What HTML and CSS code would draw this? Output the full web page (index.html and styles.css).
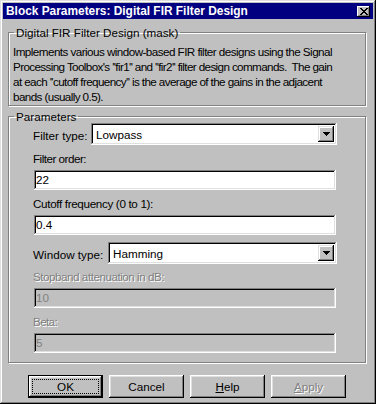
FILE: index.html
```html
<!DOCTYPE html>
<html>
<head>
<meta charset="utf-8">
<title>Block Parameters</title>
<link rel="stylesheet" href="styles.css">
</head>
<body>
<div class="window">
  <div class="titlebar">
    <span class="title">Block Parameters: Digital FIR Filter Design</span>
    <span class="close"><svg width="8" height="7" viewBox="0 0 8 7" shape-rendering="crispEdges"><path fill="#000" d="M0 0h2v1H0zM6 0h2v1H6zM1 1h2v1H1zM5 1h2v1H5zM2 2h4v1H2zM3 3h2v1H3zM2 4h4v1H2zM1 5h2v1H1zM5 5h2v1H5zM0 6h2v1H0zM6 6h2v1H6z"/></svg></span>
  </div>
  <div class="content">
    <fieldset class="group desc">
      <legend>Digital FIR Filter Design (mask)</legend>
      <p>
        <span class="ln" data-w="319">Implements various window-based FIR filter designs using the Signal</span>
        <span class="ln" data-w="319">Processing Toolbox's ''fir1'' and ''fir2'' filter design commands.&nbsp; The gain</span>
        <span class="ln" data-w="309">at each ''cutoff frequency'' is the average of the gains in the adjacent</span>
        <span class="ln" data-w="90">bands (usually 0.5).</span>
      </p>
    </fieldset>
    <fieldset class="group params">
      <legend>Parameters</legend>
      <div class="row">
        <label class="rlabel w1">Filter type:</label>
        <div class="combo c1"><span class="value">Lowpass</span><span class="drop"><svg width="7" height="4" viewBox="0 0 7 4" shape-rendering="crispEdges"><path fill="#000" d="M0 0h7v1H0zM1 1h5v1H1zM2 2h3v1H2zM3 3h1v1H3z"/></svg></span></div>
      </div>
      <div class="cap"><span data-w="53">Filter order:</span></div>
      <div class="field">22</div>
      <div class="cap"><span data-w="120">Cutoff frequency (0 to 1):</span></div>
      <div class="field">0.4</div>
      <div class="row row2">
        <label class="rlabel w2">Window type:</label>
        <div class="combo c2"><span class="value">Hamming</span><span class="drop"><svg width="7" height="4" viewBox="0 0 7 4" shape-rendering="crispEdges"><path fill="#000" d="M0 0h7v1H0zM1 1h5v1H1zM2 2h3v1H2zM3 3h1v1H3z"/></svg></span></div>
      </div>
      <div class="cap dis cap-s"><span data-w="131">Stopband attenuation in dB:</span></div>
      <div class="field off">10</div>
      <div class="cap dis"><span data-w="24">Beta:</span></div>
      <div class="field off">5</div>
    </fieldset>
    <div class="buttons">
      <div class="btn default"><span class="focus">OK</span></div>
      <div class="btn">Cancel</div>
      <div class="btn"><span><u>H</u>elp</span></div>
      <div class="btn dis"><span><u>A</u>pply</span></div>
    </div>
  </div>
</div>
<script src="fit.js"></script>
</body>
</html>
```
FILE: styles.css
```css
* { box-sizing: border-box; }
html, body { margin: 0; padding: 0; }
body {
  background: #c0c0c0;
  font-family: "Liberation Sans", Arial, sans-serif;
  font-size: 11.7px;
  color: #000;
}
.window {
  width: 376px;
  height: 404px;
  background: #c0c0c0;
  padding: 3px;
  box-shadow: inset -1px -1px #000, inset 1px 1px #dfdfdf, inset -2px -2px #808080, inset 2px 2px #fff;
  display: flex;
  flex-direction: column;
}
.titlebar {
  height: 16px;
  background: #000080;
  color: #fff;
  display: flex;
  align-items: center;
  padding: 0 3px 0 3px;
}
.title {
  flex: 1;
  font-size: 11.9px;
  font-weight: bold;
  line-height: 16px;
  white-space: nowrap;
}
.close {
  width: 13px;
  height: 11px;
  display: flex;
  align-items: center;
  justify-content: center;
  background: #c0c0c0;
  box-shadow: inset -1px -1px #000, inset 1px 1px #fff, inset -2px -2px #808080;
}
.content {
  flex: 1;
  padding: 7px 7px 0 5px;
  display: flex;
  flex-direction: column;
}
.group {
  margin: 0;
  padding: 0;
  min-width: 0;
  border: 1px solid #808080;
  box-shadow: inset 1px 1px #fff, 1px 1px #fff;
}
.group legend {
  margin-left: 5px;
  padding: 0 2px;
  line-height: 13px;
}
.desc p {
  margin: 5px 0 1px 4px;
  line-height: 15px;
}
.ln {
  display: block;
  width: max-content;
  white-space: nowrap;
}
.params {
  margin-top: 4px;
  padding-bottom: 9px;
}
.row {
  display: flex;
  align-items: center;
  height: 22px;
  padding-left: 24px;
}
.row2 { margin-top: 7px; }
.rlabel { padding-top: 2px; }
.w1 { flex: 0 0 58px; }
.w2 { flex: 0 0 75px; }
.combo {
  height: 22px;
  display: flex;
  align-items: center;
  padding: 2px;
  background: #fff;
  box-shadow: inset -1px -1px #fff, inset 1px 1px #808080, inset -2px -2px #dfdfdf, inset 2px 2px #000;
}
.c1 { width: 246px; }
.c2 { width: 229px; }
.combo .value {
  flex: 1;
  padding-left: 3px;
}
.drop {
  width: 16px;
  height: 16px;
  margin: 1px;
  display: flex;
  align-items: center;
  justify-content: center;
  background: #c0c0c0;
  box-shadow: inset -1px -1px #000, inset 1px 1px #dfdfdf, inset -2px -2px #808080, inset 2px 2px #fff;
}
.cap {
  height: 25px;
  padding: 7px 0 0 24px;
  line-height: 13px;
  white-space: nowrap;
}
.cap-s { height: 24px; padding-top: 6px; }
.dis {
  color: #808080;
  text-shadow: 1px 1px #fff;
}
.field {
  width: 302px;
  height: 20px;
  margin-left: 25px;
  padding-left: 2px;
  line-height: 20px;
  background: #fff;
  box-shadow: inset -1px -1px #fff, inset 1px 1px #808080, inset -2px -2px #dfdfdf, inset 2px 2px #000;
}
.field.off {
  background: #c0c0c0;
  color: #808080;
}
.buttons {
  display: flex;
  justify-content: center;
  gap: 6px;
  margin-top: 12px;
}
.btn {
  width: 75px;
  height: 23px;
  display: flex;
  align-items: center;
  justify-content: center;
  padding-bottom: 1px;
  background: #c0c0c0;
  box-shadow: inset -1px -1px #000, inset 1px 1px #fff, inset -2px -2px #808080, inset 2px 2px #dfdfdf;
}
.btn.default {
  padding: 4px;
  box-shadow: inset 0 0 0 1px #000, inset -2px -2px #000, inset 2px 2px #fff, inset -3px -3px #808080, inset 3px 3px #dfdfdf;
}
.focus {
  flex: 1;
  align-self: stretch;
  display: flex;
  align-items: center;
  justify-content: center;
  border: 1px dotted #000;
}
```
FILE: fit.js
```js
(function () {
  var items = document.querySelectorAll('[data-w]');
  Array.prototype.forEach.call(items, function (el) {
    var target = parseFloat(el.getAttribute('data-w'));
    el.style.letterSpacing = '0px';
    var natural = el.getBoundingClientRect().width;
    var count = el.textContent.length;
    if (count > 1) {
      el.style.letterSpacing = ((target - natural) / count).toFixed(3) + 'px';
    }
  });
})();
```
